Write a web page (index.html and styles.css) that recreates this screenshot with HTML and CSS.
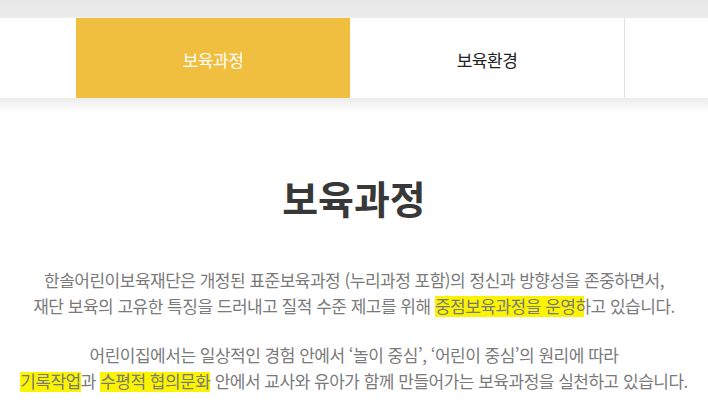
FILE: index.html
```html
<!DOCTYPE html>
<html lang="ko">
<head>
<meta charset="utf-8">
<title>보육과정</title>
<link rel="stylesheet" href="styles.css">
</head>
<body>
<div class="top-band"></div>
<nav class="tabs">
  <a class="tab active">보육과정</a>
  <a class="tab">보육환경</a>
  <a class="tab"></a>
</nav>
<div class="tab-shadow"></div>
<main class="content">
  <h1 class="title">보육과정</h1>
  <p class="desc">한솔어린이보육재단은 개정된 표준보육과정 (누리과정 포함)의 정신과 방향성을 존중하면서,<br>재단 보육의 고유한 특징을 드러내고 질적 수준 제고를 위해 <span class="hl hl-cut">중점보육과정을 운영하</span>고 있습니다.</p>
  <p class="desc">어린이집에서는 일상적인 경험 안에서 ‘놀이 중심’, ‘어린이 중심’의 원리에 따라<br><span class="hl">기록작업</span>과 <span class="hl">수평적 협의문화</span> 안에서 교사와 유아가 함께 만들어가는 보육과정을 실천하고 있습니다.</p>
</main>
</body>
</html>
```
FILE: styles.css
```css
html, body {
  margin: 0;
  padding: 0;
  background: #ffffff;
  font-family: "Noto Sans CJK KR", "Noto Sans", sans-serif;
  overflow: hidden;
}
.top-band {
  height: 18px;
  background: linear-gradient(#e8e8e8, #ececec);
}
.tabs {
  display: flex;
  height: 80px;
  padding-left: 76px;
  background: #ffffff;
  overflow: hidden;
}
.tab {
  flex: 0 0 274px;
  display: flex;
  align-items: center;
  justify-content: center;
  font-size: 17px;
  letter-spacing: -0.5px;
  color: #222222;
  padding-top: 3px;
  box-sizing: border-box;
}
.tab.active {
  background: #f1bf40;
  color: #ffffff;
}
.tab + .tab {
  flex-basis: 275px;
  border-right: 1px solid #e2e2e2;
}
.tab-shadow {
  height: 14px;
  background: linear-gradient(#ececec, #ffffff);
}
.content {
  text-align: center;
  padding-top: 59px;
}
.title {
  margin: 0;
  font-size: 39px;
  line-height: 52px;
  font-weight: 700;
  color: #383838;
}
.desc {
  margin: 44px 0 0;
  font-size: 17px;
  line-height: 26px;
  color: #7a7a7a;
  letter-spacing: -0.5px;
}
.desc + .desc {
  margin-top: 23px;
}
.hl {
  background: linear-gradient(transparent 14%, #fbf400 14%, #fbf400 96%, transparent 96%);
}
.hl-cut {
  background-size: calc(100% - 7px) 100%;
  background-repeat: no-repeat;
}
```
